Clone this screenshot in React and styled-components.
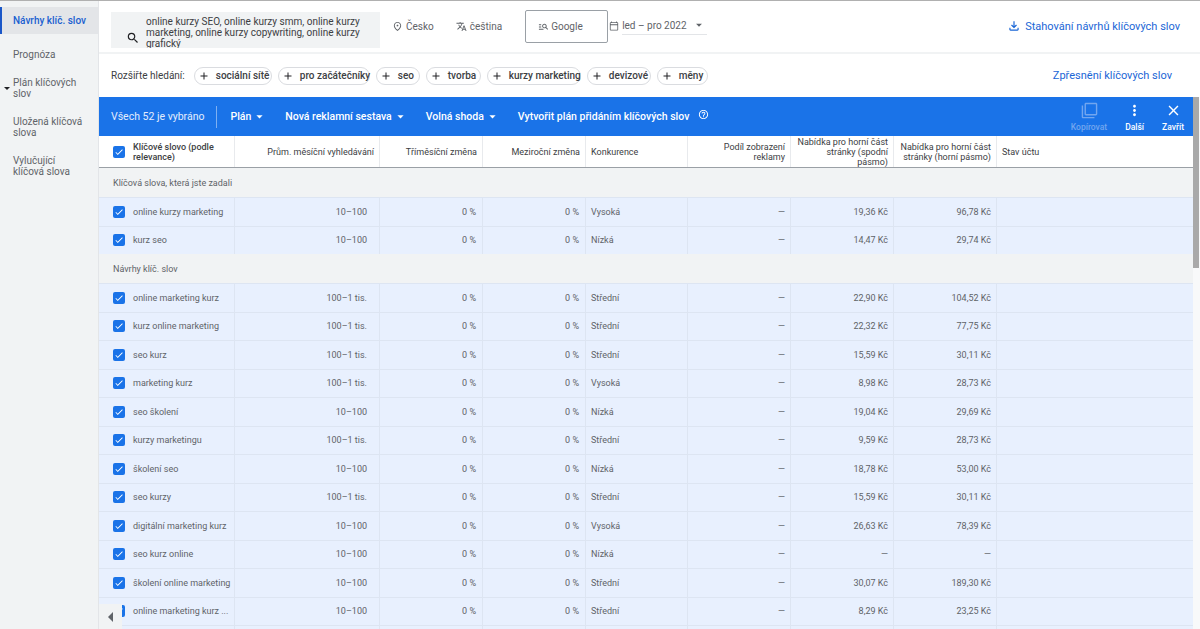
import React from "react";
import styled, { createGlobalStyle } from "styled-components";
import {
  MdSearch,
  MdOutlinePlace,
  MdTranslate,
  MdManageSearch,
  MdOutlineCalendarToday,
  MdArrowDropDown,
  MdOutlineFileDownload,
  MdAdd,
  MdHelpOutline,
  MdFilterNone,
  MdMoreVert,
  MdClose,
  MdCheck,
} from "react-icons/md";

const GlobalStyle = createGlobalStyle`
  html, body {
    margin: 0;
    padding: 0;
    background: #fff;
    overflow: hidden;
  }
  * { box-sizing: border-box; }
`;

const COLS = "136px 145px 103px 103px 102px 103px 103px 103px 196px";

const Page = styled.div`
  width: 1200px;
  height: 629px;
  display: flex;
  overflow: hidden;
  border-top: 1px solid #b0b0b0;
  font-family: Roboto, "Noto Sans", sans-serif;
  color: #3c4043;
  position: relative;
`;

const Sidebar = styled.nav`
  width: 99px;
  flex: none;
  background: #f1f3f4;
  padding-top: 6px;
  border-right: 1px solid #e3e5e8;
  font-size: 10px;
  line-height: 11px;
`;

const NavItem = styled.div`
  position: relative;
  padding: 0 12px 0 13px;
  margin-bottom: ${(p) => p.$gap}px;
  height: ${(p) => (p.$active ? "27px" : "auto")};
  display: ${(p) => (p.$active ? "flex" : "block")};
  align-items: center;
  background: ${(p) => (p.$active ? "#e3e5e8" : "transparent")};
  border-left: ${(p) => (p.$active ? "2px solid #1a57c8" : "none")};
  padding-left: ${(p) => (p.$active ? "11px" : "13px")};
  color: ${(p) => (p.$active ? "#1a5fd0" : "#5f6368")};
  font-weight: ${(p) => (p.$active ? 500 : 400)};
`;

const NavCaret = styled.span`
  position: absolute;
  left: 4px;
  top: 10px;
  width: 0;
  height: 0;
  border-left: 3px solid transparent;
  border-right: 3px solid transparent;
  border-top: 3px solid #202124;
`;

const Main = styled.main`
  flex: 1;
  min-width: 0;
  display: flex;
  flex-direction: column;
`;

const TopBar = styled.div`
  height: 51px;
  flex: none;
  display: flex;
  align-items: flex-start;
  padding: 11px 20px 0 12px;
`;

const SearchBox = styled.div`
  width: 269px;
  height: 36px;
  flex: none;
  background: #f1f3f4;
  display: flex;
  overflow: hidden;
  padding: 4px 0 0 15px;
  color: #3c4043;
  font-size: 10px;
  line-height: 11px;

  svg {
    flex: none;
    font-size: 14px;
    margin: 15px 6px 0 0;
    color: #202124;
  }
`;

const FilterItem = styled.div`
  display: flex;
  align-items: center;
  gap: ${(p) => p.$gap || 3}px;
  height: 28px;
  margin-left: ${(p) => p.$left}px;
  font-size: 10px;
  color: #5f6368;
  white-space: nowrap;

  svg {
    font-size: 11px;
    flex: none;
  }
`;

const NetworkBox = styled.div`
  width: 83px;
  height: 33px;
  margin: -2px 0 0 23px;
  border: 1px solid #9aa0a6;
  border-radius: 2px;
  display: flex;
  align-items: center;
  gap: 2px;
  padding-left: 12px;
  font-size: 10px;
  color: #5f6368;

  svg {
    font-size: 11px;
  }
`;

const DateIcon = styled.div`
  height: 28px;
  display: flex;
  align-items: center;
  margin-left: 1px;
  color: #5f6368;
  font-size: 10px;
`;

const DateSelect = styled.div`
  width: 85px;
  height: 19px;
  margin: 4px 0 0 3px;
  border-bottom: 1px solid #e3e5e8;
  display: flex;
  align-items: center;
  justify-content: space-between;
  font-size: 10px;
  color: #5f6368;

  svg {
    font-size: 14px;
    margin-right: 1px;
  }
`;

const DownloadLink = styled.div`
  margin-left: auto;
  height: 28px;
  display: flex;
  align-items: center;
  gap: 4px;
  color: #1a66d6;
  font-size: 11px;
  white-space: nowrap;

  svg {
    font-size: 14px;
  }
`;

const ChipBar = styled.div`
  height: 45px;
  flex: none;
  border-top: 2px solid #f1f3f4;
  display: flex;
  align-items: center;
  padding: 0 28px 0 12px;
`;

const ChipLabel = styled.span`
  font-size: 10px;
  color: #3c4043;
  margin-right: 9px;
  white-space: nowrap;
`;

const ChipList = styled.div`
  display: flex;
  gap: 6px;
`;

const Chip = styled.div`
  height: 18px;
  width: ${(p) => p.$width}px;
  display: flex;
  align-items: center;
  gap: 6px;
  padding-left: 3px;
  border: 1px solid #dadce0;
  border-radius: 9px;
  font-size: 10px;
  font-weight: 500;
  color: #3c4043;
  white-space: nowrap;

  svg {
    font-size: 12px;
    color: #202124;
    flex: none;
  }
`;

const RefineLink = styled.div`
  margin-left: auto;
  color: #1a66d6;
  font-size: 11px;
  white-space: nowrap;
`;

const Workspace = styled.div`
  flex: 1;
  min-height: 0;
  display: flex;
`;

const TableArea = styled.div`
  width: 1094px;
  flex: none;
  overflow: hidden;
`;

const Scrollbar = styled.div`
  flex: 1;
  background: #f8f9fa;
`;

const ScrollThumb = styled.div`
  width: 6px;
  height: 171px;
  background: #a9a9a9;
`;

const ActionBar = styled.div`
  height: 39px;
  background: #1a73e8;
  display: flex;
  align-items: center;
  color: #fff;
  font-size: 10.5px;
  padding: 0 9px 0 12px;
  white-space: nowrap;
`;

const Selected = styled.span`
  color: #e3edfd;
`;

const Divider = styled.span`
  width: 1px;
  height: 22px;
  background: #7fb0f1;
  margin: 0 13px 0 12px;
`;

const ActionMenu = styled.span`
  display: flex;
  align-items: center;
  margin-right: ${(p) => p.$right}px;
  font-weight: 500;

  svg {
    font-size: 15px;
    margin-left: 1px;
  }
`;

const PlanAction = styled.span`
  font-weight: 500;
`;

const HelpIcon = styled(MdHelpOutline)`
  font-size: 11px;
  margin: -4px 0 0 9px;
`;

const ToolGroup = styled.div`
  margin-left: auto;
  display: flex;
  gap: 18px;
`;

const Tool = styled.div`
  display: flex;
  flex-direction: column;
  align-items: center;
  font-size: 8.5px;
  font-weight: 500;
  line-height: 10px;
  color: ${(p) => (p.$muted ? "#72a6ef" : "#fff")};

  svg {
    font-size: 17px;
    margin-bottom: 3px;
  }
`;

const HeaderRow = styled.div`
  display: grid;
  grid-template-columns: ${COLS};
  height: 32px;
  background: #fff;
  border-bottom: 1px solid #9aa0a6;
`;

const HeaderCell = styled.div`
  display: flex;
  align-items: center;
  justify-content: ${(p) => (p.$left ? "flex-start" : "flex-end")};
  text-align: ${(p) => (p.$left ? "left" : "right")};
  padding: 0 5px;
  border-right: ${(p) => (p.$last ? "none" : "1px solid #e8eaed")};
  font-size: 9px;
  line-height: 10px;
  color: #3c4043;
  font-weight: ${(p) => (p.$bold ? 500 : 400)};
`;

const KeywordHead = styled(HeaderCell)`
  padding-left: 14px;
  gap: 8px;
`;

const GroupRow = styled.div`
  height: 29px;
  background: #f1f3f4;
  display: flex;
  align-items: center;
  padding-left: 14px;
  font-size: 9px;
  color: #5f6368;
`;

const Row = styled.div`
  display: grid;
  grid-template-columns: ${COLS};
  height: 28.5px;
  background: #e8f0fe;
  border-top: 1px solid #dde5f2;
`;

const Cell = styled.div`
  display: flex;
  align-items: center;
  justify-content: ${(p) => (p.$left ? "flex-start" : "flex-end")};
  padding: 0 ${(p) => p.$pad || 5}px 0 5px;
  border-right: ${(p) => (p.$last ? "none" : "1px solid #dde5f2")};
  font-size: 9px;
  color: #5f6368;
  white-space: nowrap;
`;

const KeywordCell = styled(Cell)`
  padding-left: 14px;
  gap: 8px;
`;

const Box = styled.span`
  width: 12px;
  height: 12px;
  flex: none;
  background: #1a73e8;
  border-radius: 2px;
  display: flex;
  align-items: center;
  justify-content: center;
  color: #fff;

  svg {
    font-size: 10px;
  }
`;

const Collapse = styled.div`
  position: absolute;
  left: 99px;
  bottom: 0;
  width: 23px;
  height: 25px;
  background: #f1f3f4;
  display: flex;
  align-items: center;
  justify-content: center;

  &::before {
    content: "";
    border-top: 5px solid transparent;
    border-bottom: 5px solid transparent;
    border-right: 5px solid #5f6368;
  }
`;

const chips = [
  ["sociální sítě", 78],
  ["pro začátečníky", 92],
  ["seo", 44],
  ["tvorba", 55],
  ["kurzy marketing", 94],
  ["devizové", 64],
  ["měny", 51],
];

const entered = [
  ["online kurzy marketing", "10–100", "Vysoká", "19,36 Kč", "96,78 Kč"],
  ["kurz seo", "10–100", "Nízká", "14,47 Kč", "29,74 Kč"],
];

const ideas = [
  ["online marketing kurz", "100–1 tis.", "Střední", "22,90 Kč", "104,52 Kč"],
  ["kurz online marketing", "100–1 tis.", "Střední", "22,32 Kč", "77,75 Kč"],
  ["seo kurz", "100–1 tis.", "Střední", "15,59 Kč", "30,11 Kč"],
  ["marketing kurz", "100–1 tis.", "Vysoká", "8,98 Kč", "28,73 Kč"],
  ["seo školení", "10–100", "Nízká", "19,04 Kč", "29,69 Kč"],
  ["kurzy marketingu", "100–1 tis.", "Střední", "9,59 Kč", "28,73 Kč"],
  ["školení seo", "10–100", "Nízká", "18,78 Kč", "53,00 Kč"],
  ["seo kurzy", "100–1 tis.", "Střední", "15,59 Kč", "30,11 Kč"],
  ["digitální marketing kurz", "10–100", "Vysoká", "26,63 Kč", "78,39 Kč"],
  ["seo kurz online", "10–100", "Nízká", "—", "—"],
  ["školení online marketing", "10–100", "Střední", "30,07 Kč", "189,30 Kč"],
  ["online marketing kurz ...", "10–100", "Střední", "8,29 Kč", "23,25 Kč"],
  ["", "", "", "", ""],
];

const KeywordRow = ({ data }) => {
  const [keyword, volume, competition, low, high] = data;
  const filled = keyword !== "";
  return (
    <Row>
      <KeywordCell $left>
        {filled && (
          <Box>
            <MdCheck />
          </Box>
        )}
        {keyword}
      </KeywordCell>
      <Cell $pad={12}>{volume}</Cell>
      <Cell $pad={6}>{filled && "0 %"}</Cell>
      <Cell $pad={6}>{filled && "0 %"}</Cell>
      <Cell $left>{competition}</Cell>
      <Cell>{filled && "—"}</Cell>
      <Cell>{low}</Cell>
      <Cell>{high}</Cell>
      <Cell $last />
    </Row>
  );
};

const App = () => (
  <>
    <GlobalStyle />
    <Page>
      <Sidebar>
        <NavItem $active $gap={15}>Návrhy klíč. slov</NavItem>
        <NavItem $gap={17}>Prognóza</NavItem>
        <NavItem $gap={17}>
          <NavCaret />
          Plán klíčových slov
        </NavItem>
        <NavItem $gap={17}>Uložená klíčová slova</NavItem>
        <NavItem $gap={0}>Vylučující klíčová slova</NavItem>
      </Sidebar>
      <Main>
        <TopBar>
          <SearchBox>
            <MdSearch />
            <div>
              online kurzy SEO, online kurzy smm, online kurzy
              <br />
              marketing, online kurzy copywriting, online kurzy grafický
              <br />
              design, SEO pro začátečníky, tvorba obsahu pro sociální
              <br />
              sítě
            </div>
          </SearchBox>
          <FilterItem $left={12}>
            <MdOutlinePlace />
            Česko
          </FilterItem>
          <FilterItem $left={22}>
            <MdTranslate />
            čeština
          </FilterItem>
          <NetworkBox>
            <MdManageSearch />
            Google
          </NetworkBox>
          <DateIcon>
            <MdOutlineCalendarToday />
          </DateIcon>
          <DateSelect>
            led – pro 2022
            <MdArrowDropDown />
          </DateSelect>
          <DownloadLink>
            <MdOutlineFileDownload />
            Stahování návrhů klíčových slov
          </DownloadLink>
        </TopBar>
        <ChipBar>
          <ChipLabel>Rozšiřte hledání:</ChipLabel>
          <ChipList>
            {chips.map(([label, width]) => (
              <Chip key={label} $width={width}>
                <MdAdd />
                {label}
              </Chip>
            ))}
          </ChipList>
          <RefineLink>Zpřesnění klíčových slov</RefineLink>
        </ChipBar>
        <Workspace>
          <TableArea>
            <ActionBar>
              <Selected>Všech 52 je vybráno</Selected>
              <Divider />
              <ActionMenu $right={18}>
                Plán
                <MdArrowDropDown />
              </ActionMenu>
              <ActionMenu $right={18}>
                Nová reklamní sestava
                <MdArrowDropDown />
              </ActionMenu>
              <ActionMenu $right={18}>
                Volná shoda
                <MdArrowDropDown />
              </ActionMenu>
              <PlanAction>Vytvořit plán přidáním klíčových slov</PlanAction>
              <HelpIcon />
              <ToolGroup>
                <Tool $muted>
                  <MdFilterNone />
                  Kopírovat
                </Tool>
                <Tool>
                  <MdMoreVert />
                  Další
                </Tool>
                <Tool>
                  <MdClose />
                  Zavřít
                </Tool>
              </ToolGroup>
            </ActionBar>
            <HeaderRow>
              <KeywordHead $left $bold>
                <Box>
                  <MdCheck />
                </Box>
                <span>Klíčové slovo (podle relevance)</span>
              </KeywordHead>
              <HeaderCell>Prům. měsíční vyhledávání</HeaderCell>
              <HeaderCell>Tříměsíční změna</HeaderCell>
              <HeaderCell>Meziroční změna</HeaderCell>
              <HeaderCell $left>Konkurence</HeaderCell>
              <HeaderCell>Podíl zobrazení reklamy</HeaderCell>
              <HeaderCell>Nabídka pro horní část stránky (spodní pásmo)</HeaderCell>
              <HeaderCell>Nabídka pro horní část stránky (horní pásmo)</HeaderCell>
              <HeaderCell $left $last>Stav účtu</HeaderCell>
            </HeaderRow>
            <GroupRow>Klíčová slova, která jste zadali</GroupRow>
            {entered.map((row) => (
              <KeywordRow key={row[0]} data={row} />
            ))}
            <GroupRow>Návrhy klíč. slov</GroupRow>
            {ideas.map((row) => (
              <KeywordRow key={row[0] || "empty"} data={row} />
            ))}
          </TableArea>
          <Scrollbar>
            <ScrollThumb />
          </Scrollbar>
        </Workspace>
      </Main>
      <Collapse />
    </Page>
  </>
);

export default App;
